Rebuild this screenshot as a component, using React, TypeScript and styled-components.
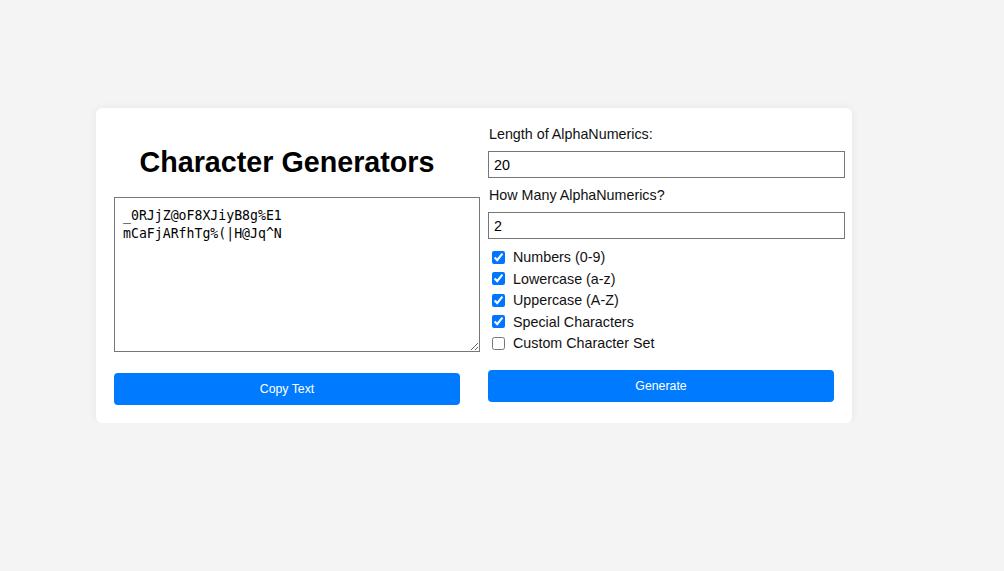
import React, { FC, useState } from 'react';
import styled, { createGlobalStyle } from 'styled-components';

const GlobalStyle = createGlobalStyle`
    body {
        margin: 0;
        background: #f4f4f4;
        font-family: "Liberation Sans", Arial, sans-serif;
    }
`;

const Page = styled.div`
    padding: 108px 0 0 96px;
`;

const Card = styled.div`
    display: flex;
    align-items: flex-start;
    gap: 28px;
    width: 756px;
    box-sizing: border-box;
    padding: 18px;
    background: #fff;
    border-radius: 6px;
    box-shadow: 0 0 8px rgba(0, 0, 0, 0.06);
`;

const Column = styled.div`
    width: 346px;
    display: flex;
    flex-direction: column;
`;

const Title = styled.h1`
    margin: 20px 0 19px;
    height: 32px;
    line-height: 32px;
    font-size: 28.7px;
    font-weight: 700;
    text-align: center;
    color: #000;
`;

const Output = styled.textarea`
    display: block;
    width: 366px;
    height: 155px;
    box-sizing: border-box;
    padding: 9px 8px 8px;
    border: 1px solid #767676;
    font-family: "DejaVu Sans Mono", "Liberation Mono", monospace;
    font-size: 13.2px;
    line-height: 18px;
    color: #000;
    resize: both;
    outline: none;
`;

const Button = styled.button<{ $top: number }>`
    display: block;
    width: 346px;
    height: 32px;
    margin-top: ${props => props.$top}px;
    border: none;
    border-radius: 4px;
    background: #007bff;
    color: #fff;
    font-family: "Liberation Sans", Arial, sans-serif;
    font-size: 12.3px;
    cursor: pointer;
`;

const Label = styled.label`
    display: block;
    height: 17px;
    line-height: 17px;
    padding-left: 1px;
    font-size: 14.3px;
    color: #111;
`;

const NumberInput = styled.input`
    display: block;
    width: 357px;
    height: 27px;
    box-sizing: border-box;
    margin: 8px 0 9px;
    padding: 0 5px;
    border: 1px solid #767676;
    font-family: "Liberation Sans", Arial, sans-serif;
    font-size: 14.3px;
    color: #000;
    outline: none;
`;

const Options = styled.div`
    display: flex;
    flex-direction: column;
    margin-top: -1.5px;
`;

const OptionRow = styled.label`
    display: flex;
    align-items: center;
    height: 21.5px;
    font-size: 14.3px;
    color: #111;
`;

const Check = styled.input`
    width: 13px;
    height: 13px;
    margin: 0 8px 0 4px;
    accent-color: #0075ff;
`;

const options = [
    { label: "Numbers (0-9)", checked: true },
    { label: "Lowercase (a-z)", checked: true },
    { label: "Uppercase (A-Z)", checked: true },
    { label: "Special Characters", checked: true },
    { label: "Custom Character Set", checked: false },
];

const App: FC = () => {
    const [length, setLength] = useState("20");
    const [count, setCount] = useState("2");
    const [flags, setFlags] = useState(options.map(o => o.checked));
    const [text] = useState("_0RJjZ@oF8XJiyB8g%E1\nmCaFjARfhTg%(|H@Jq^N");

    return (
        <>
            <GlobalStyle />
            <Page>
                <Card>
                    <Column>
                        <Title>Character Generators</Title>
                        <Output value={text} readOnly />
                        <Button $top={21}>Copy Text</Button>
                    </Column>
                    <Column>
                        <Label>Length of AlphaNumerics:</Label>
                        <NumberInput type="text" value={length} onChange={e => setLength(e.target.value)} />
                        <Label>How Many AlphaNumerics?</Label>
                        <NumberInput type="text" value={count} onChange={e => setCount(e.target.value)} />
                        <Options>
                            {options.map((o, i) => (
                                <OptionRow key={o.label}>
                                    <Check
                                        type="checkbox"
                                        checked={flags[i]}
                                        onChange={() => setFlags(flags.map((f, j) => j === i ? !f : f))}
                                    />
                                    {o.label}
                                </OptionRow>
                            ))}
                        </Options>
                        <Button $top={16}>Generate</Button>
                    </Column>
                </Card>
            </Page>
        </>
    );
};

export default App;
